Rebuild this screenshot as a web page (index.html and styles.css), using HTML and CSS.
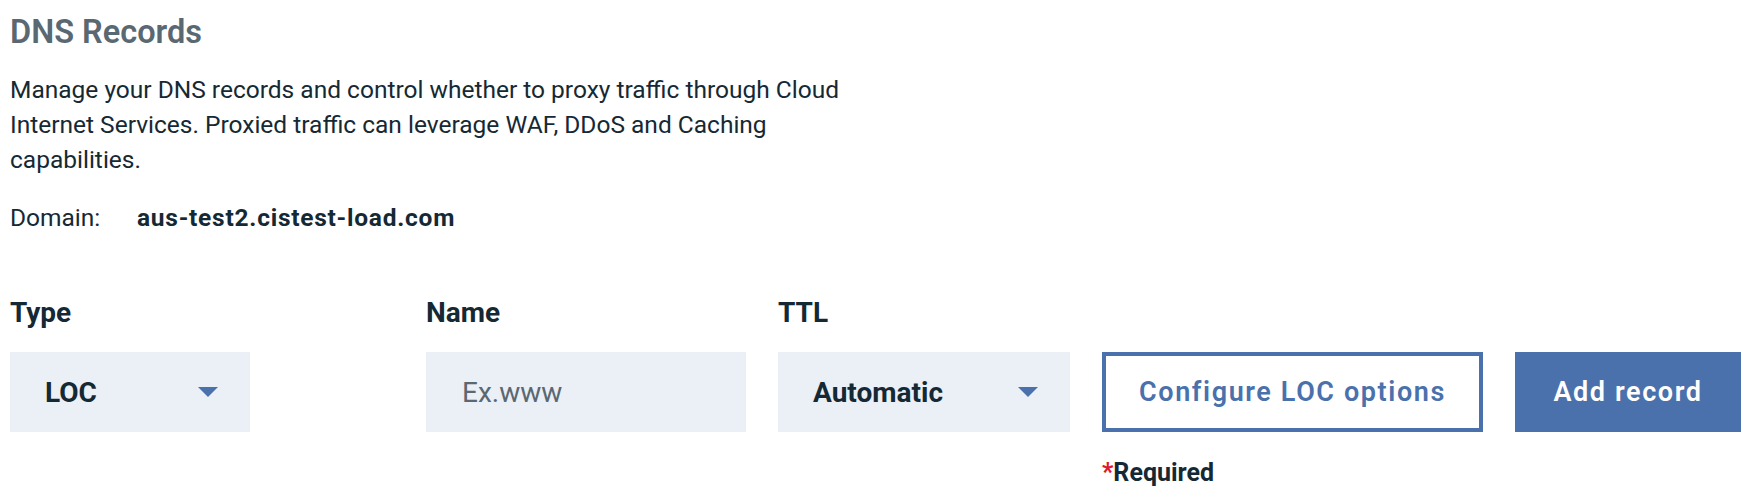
FILE: index.html
```html
<!DOCTYPE html>
<html lang="en">
<head>
<meta charset="utf-8">
<title>DNS Records</title>
<link rel="stylesheet" href="styles.css">
</head>
<body>
<div class="page">
  <h1 class="title">DNS Records</h1>
  <p class="desc">Manage your DNS records and control whether to proxy traffic through Cloud Internet Services. Proxied traffic can leverage WAF, DDoS and Caching capabilities.</p>
  <div class="domain"><span class="domain-label">Domain:</span><span class="domain-value">aus-test2.cistest-load.com</span></div>
  <div class="form">
    <div class="label">Type</div>
    <div class="label">Name</div>
    <div class="label">TTL</div>
    <div class="label"></div>
    <div class="label"></div>

    <div class="select select-type"><span>LOC</span><span class="arrow"></span></div>
    <div class="input"><span class="placeholder">Ex.www</span></div>
    <div class="select"><span>Automatic</span><span class="arrow"></span></div>
    <button class="btn btn-secondary">Configure LOC options</button>
    <button class="btn btn-primary">Add record</button>

    <div></div>
    <div></div>
    <div></div>
    <div class="required"><span class="star">*</span>Required</div>
    <div></div>
  </div>
</div>
</body>
</html>
```
FILE: styles.css
```css
* { box-sizing: border-box; }
html, body { margin: 0; padding: 0; background: #ffffff; }
body {
  font-family: Roboto, "Liberation Sans", sans-serif;
  color: #152935;
}
.page {
  padding: 12px 0 0 10px;
}
.title {
  margin: 0;
  font-size: 32.5px;
  line-height: 40px;
  font-weight: 600;
  color: #5a6872;
}
.desc {
  margin: 20px 0 0 0;
  width: 840px;
  font-size: 24.5px;
  line-height: 35px;
  font-weight: 400;
}
.domain {
  display: flex;
  margin-top: 23px;
  font-size: 24.5px;
  line-height: 35px;
}
.domain-label { width: 127px; }
.domain-value { font-weight: 700; letter-spacing: 0.75px; }
.form {
  margin-top: 58px;
  display: grid;
  grid-template-columns: 384px 320px 292px 381px 226px;
  grid-template-rows: 42px 80px auto;
  column-gap: 32px;
  row-gap: 17px;
}
.label {
  font-size: 28px;
  line-height: 40px;
  font-weight: 700;
}
.select, .input {
  height: 80px;
  background: #ebeff6;
  display: flex;
  align-items: center;
  justify-content: space-between;
  padding: 0 32px 0 35px;
  font-size: 28px;
  font-weight: 700;
}
.select-type { width: 240px; }
.input { padding-left: 36px; font-weight: 400; }
.placeholder { color: #5a6872; }
.arrow {
  width: 0;
  height: 0;
  border-left: 10px solid transparent;
  border-right: 10px solid transparent;
  border-top: 10px solid #4a71ac;
}
.btn {
  height: 80px;
  margin: 0;
  padding: 0;
  font-family: Roboto, "Liberation Sans", sans-serif;
  font-size: 27px;
  font-weight: 600;
  letter-spacing: 1.6px;
  cursor: pointer;
}
.btn-secondary {
  background: #ffffff;
  color: #4a71ac;
  border: 4px solid #4a71ac;
}
.btn-primary {
  background: #4a71ac;
  color: #ffffff;
  border: 0;
}
.required {
  margin-top: 9px;
  font-size: 25px;
  font-weight: 700;
  line-height: 30px;
}
.star { color: #e0182d; }
```
